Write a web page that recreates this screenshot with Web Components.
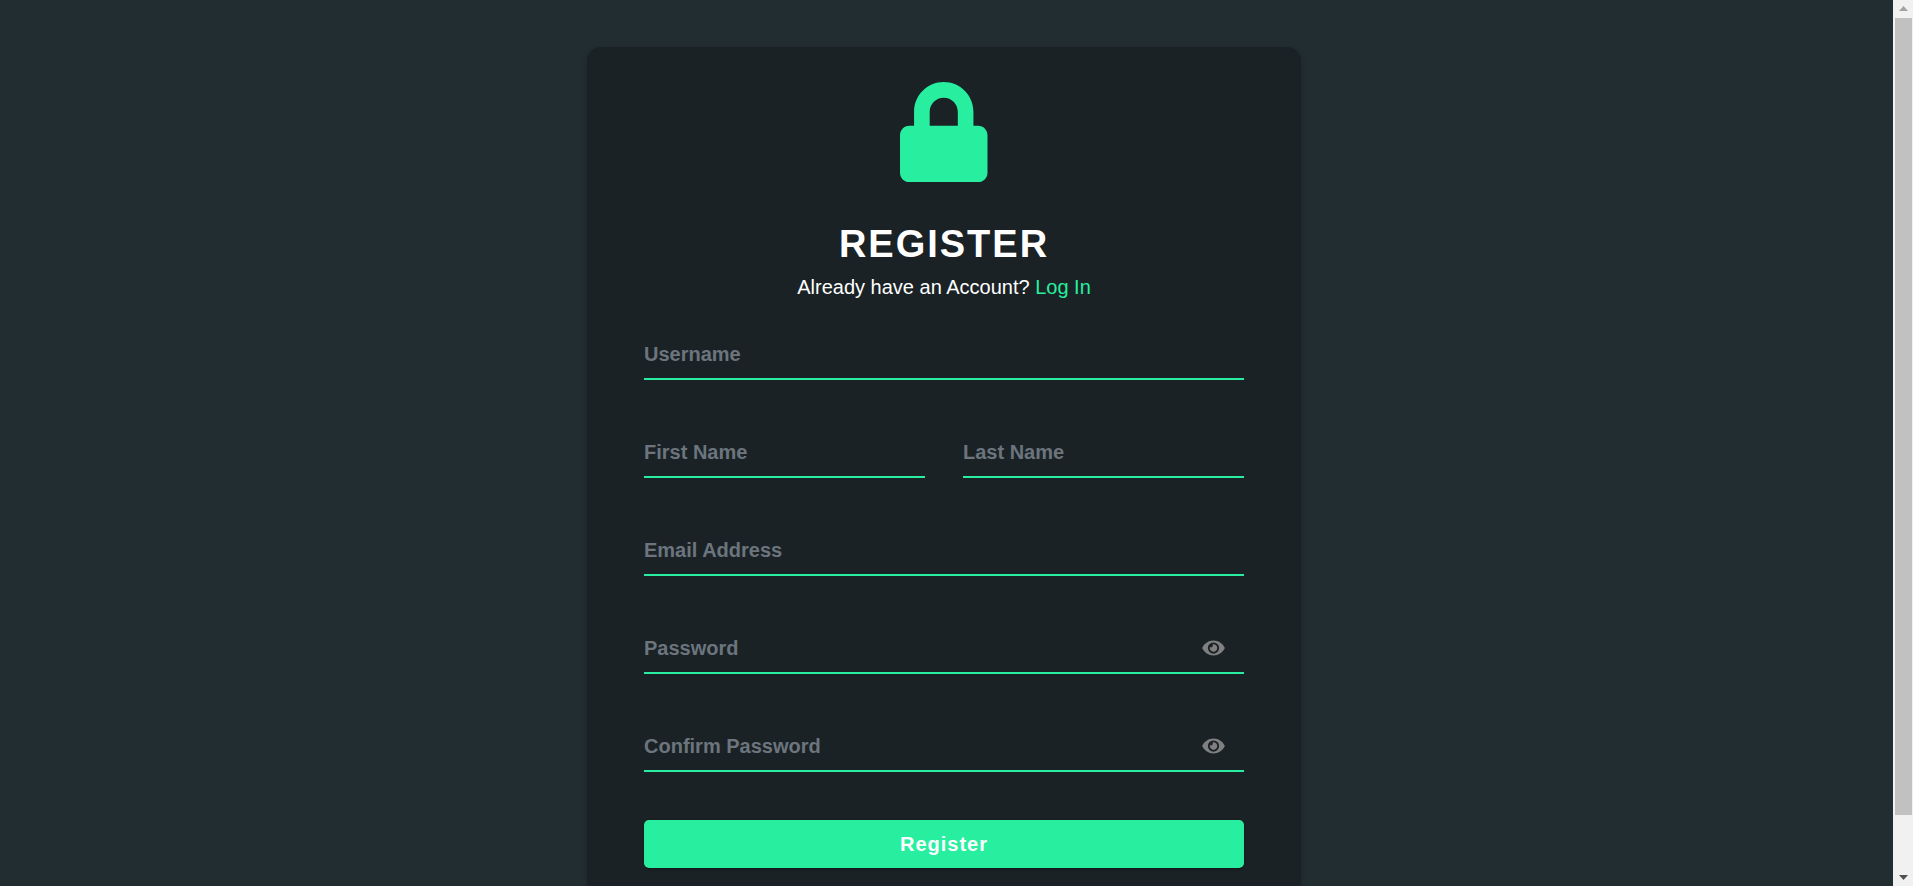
<!DOCTYPE html>
<html lang="en">
<head>
<meta charset="utf-8">
<meta name="viewport" content="width=device-width, initial-scale=1">
<title>Register</title>
<style>
  :root {
    --accent: #27ef9f;
    --page: #222d32;
    --card: #1a2226;
    --hint: #6c757d;
  }
  html, body { margin: 0; height: 100%; }
  body {
    background: var(--page);
    color: #fff;
    font: 20px/30px "Liberation Sans", Arial, sans-serif;
  }
</style>
</head>
<body>
<app-shell>
  <register-card heading="REGISTER">
    <lock-icon slot="icon"></lock-icon>
    <span slot="intro">Already have an Account? <text-link href="#login">Log In</text-link></span>
    <form-field name="username" label="Username"></form-field>
    <field-row>
      <form-field name="first-name" label="First Name"></form-field>
      <form-field name="last-name" label="Last Name"></form-field>
    </field-row>
    <form-field name="email" type="email" label="Email Address"></form-field>
    <form-field name="password" type="password" label="Password"></form-field>
    <form-field name="confirm" type="password" label="Confirm Password"></form-field>
    <submit-button>Register</submit-button>
  </register-card>
</app-shell>

<script>
const define = (name, html, setup) => {
  const template = document.createElement('template');
  template.innerHTML = html;
  customElements.define(name, class extends HTMLElement {
    constructor() {
      super();
      this.attachShadow({ mode: 'open' }).append(template.content.cloneNode(true));
      if (setup) setup(this, this.shadowRoot);
    }
  });
};

define('scroll-rail', `
  <style>
    :host { display: flex; flex-direction: column; flex: none; width: 20px; box-sizing: border-box; padding: 0 1px 0 2px; background: #f1f1f1; }
    svg { display: block; width: 17px; height: 18px; flex: none; }
    .track { flex: 1; min-height: 0; display: grid; grid-template-rows: 797fr 53fr; }
    .thumb { background: #c1c1c1; }
  </style>
  <svg viewBox="0 0 17 18" aria-hidden="true"><path d="M4 11h9L8.500 6z" fill="#a3a3a3"/></svg>
  <div class="track"><div class="thumb"></div></div>
  <svg viewBox="0 0 17 18" aria-hidden="true"><path d="M4 7h9L8.500 12z" fill="#505050"/></svg>
`);

define('app-shell', `
  <style>
    :host { display: flex; height: 100vh; overflow: hidden; }
    main { flex: 1; min-width: 0; overflow-y: auto; scrollbar-width: none; padding: 47px 5px 47px 0; box-sizing: border-box; }
  </style>
  <main><slot></slot></main>
  <scroll-rail></scroll-rail>
`);

define('lock-icon', `
  <style>
    :host { display: block; }
    svg { display: block; height: 100px; margin: 0 auto; fill: var(--accent); }
  </style>
  <svg viewBox="0 0 448 512" aria-hidden="true"><path d="M400 224h-24v-72C376 68.2 307.8 0 224 0S72 68.2 72 152v72H48c-26.5 0-48 21.5-48 48v192c0 26.5 21.5 48 48 48h352c26.5 0 48-21.5 48-48V272c0-26.5-21.5-48-48-48zm-104 0H152v-72c0-39.7 32.3-72 72-72s72 32.3 72 72v72z"/></svg>
`);

define('text-link', `
  <style>
    :host { display: inline; }
    a { color: var(--accent); text-decoration: none; }
    a:hover { text-decoration: underline; }
  </style>
  <a><slot></slot></a>
`, (host, root) => { root.querySelector('a').href = host.getAttribute('href'); });

define('field-row', `
  <style>
    :host { display: grid; grid-template-columns: 1fr 1fr; gap: 38px; }
  </style>
  <slot></slot>
`);

define('form-field', `
  <style>
    :host { display: flex; align-items: center; box-sizing: border-box; height: 50px; min-width: 0; border-bottom: 2px solid var(--accent); }
    input { flex: 1; min-width: 0; height: 100%; box-sizing: border-box; margin: 0; padding: 0; border: 0; outline: 0; background: transparent; color: #fff; font: bold 20px/30px "Liberation Sans", Arial, sans-serif; }
    input::placeholder { color: var(--hint); opacity: 1; }
    button { flex: none; display: flex; margin: 0 19px 0 0; padding: 0; border: 0; background: none; cursor: pointer; }
    button[hidden] { display: none; }
    svg { display: block; width: 23px; height: 20px; fill: gray; }
  </style>
  <input>
  <button type="button" aria-label="Show password" hidden>
    <svg viewBox="0 0 576 512" aria-hidden="true"><path d="M572.52 241.4C518.29 135.59 410.93 64 288 64S57.68 135.64 3.48 241.41a32.35 32.35 0 0 0 0 29.19C57.71 376.41 165.07 448 288 448s230.32-71.64 284.52-177.41a32.35 32.35 0 0 0 0-29.19zM288 400a144 144 0 1 1 144-144 143.93 143.93 0 0 1-144 144zm0-240a95.31 95.31 0 0 0-25.31 3.79 47.85 47.85 0 0 1-66.9 66.9A95.78 95.78 0 1 0 288 160z"/></svg>
  </button>
`, (host, root) => {
  const input = root.querySelector('input');
  const toggle = root.querySelector('button');
  const label = host.getAttribute('label');
  input.type = host.getAttribute('type') || 'text';
  input.name = host.getAttribute('name');
  input.placeholder = label;
  input.setAttribute('aria-label', label);
  toggle.hidden = input.type !== 'password';
  toggle.addEventListener('click', () => {
    input.type = input.type === 'password' ? 'text' : 'password';
  });
});

define('submit-button', `
  <style>
    :host { display: block; }
    button { display: block; width: 100%; height: 48px; margin: 0; padding: 0; border: 0; border-radius: 5px; background: var(--accent); color: #fff; font: bold 20px/30px "Liberation Sans", Arial, sans-serif; letter-spacing: 1px; cursor: pointer; box-shadow: 0 1px 3px rgba(0, 0, 0, .12), 0 1px 2px rgba(0, 0, 0, .24); }
  </style>
  <button type="submit"><slot></slot></button>
`);

define('register-card', `
  <style>
    :host { display: block; box-sizing: border-box; width: 100%; max-width: 714px; margin: 0 auto; padding: 35px 57px 57px; border-radius: 14px; background: var(--card); box-shadow: 0 3px 6px rgba(0, 0, 0, .2); }
    header { text-align: center; margin-bottom: 28px; }
    h1 { margin: 39px 0 5px; font-size: 38px; line-height: 46px; letter-spacing: 2px; }
    p { margin: 0; }
    form { display: flex; flex-direction: column; gap: 48px; }
  </style>
  <header>
    <slot name="icon"></slot>
    <h1></h1>
    <p><slot name="intro"></slot></p>
  </header>
  <form><slot></slot></form>
`, (host, root) => { root.querySelector('h1').textContent = host.getAttribute('heading'); });
</script>
</body>
</html>
